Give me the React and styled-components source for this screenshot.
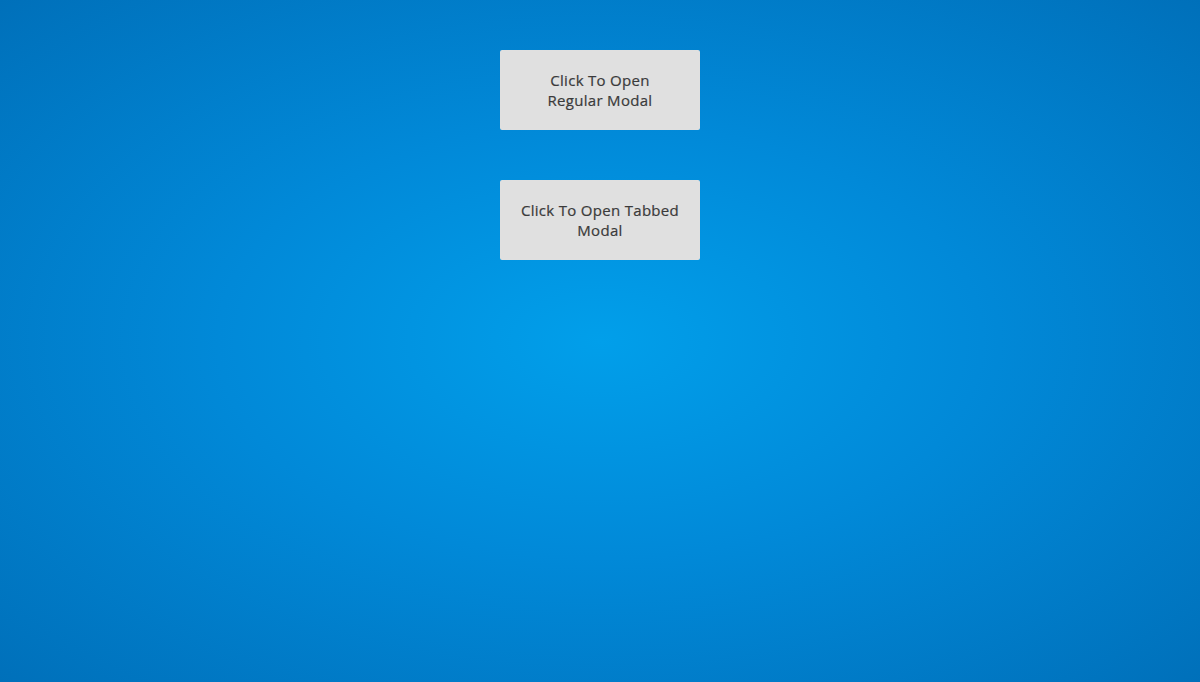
import React from "react";
import styled, { createGlobalStyle } from "styled-components";

const GlobalStyle = createGlobalStyle`
  html, body {
    margin: 0;
    padding: 0;
    height: 100%;
  }
  #root {
    height: 100%;
  }
`;

const Page = styled.div`
  min-height: 100vh;
  box-sizing: border-box;
  padding-top: 50px;
  display: flex;
  flex-direction: column;
  align-items: center;
  gap: 50px;
  background: radial-gradient(ellipse at 50% 50%, #019fea 0%, #0189d8 45%, #0070ba 100%);
  font-family: "Open Sans", "Liberation Sans", sans-serif;
`;

const OpenButton = styled.button`
  width: 200px;
  height: 80px;
  padding: 0 18px;
  box-sizing: border-box;
  border: none;
  border-radius: 2px;
  background-color: #e0e0e0;
  color: #3a3a3a;
  font-family: inherit;
  font-size: 15px;
  font-weight: 500;
  line-height: 20px;
  letter-spacing: 0.3px;
  -webkit-text-stroke: 0.2px #3a3a3a;
  cursor: pointer;
`;

const App = () => {
  return (
    <>
      <GlobalStyle />
      <Page>
        <OpenButton>
          Click To Open
          <br />
          Regular Modal
        </OpenButton>
        <OpenButton>Click To Open Tabbed Modal</OpenButton>
      </Page>
    </>
  );
};

export default App;
